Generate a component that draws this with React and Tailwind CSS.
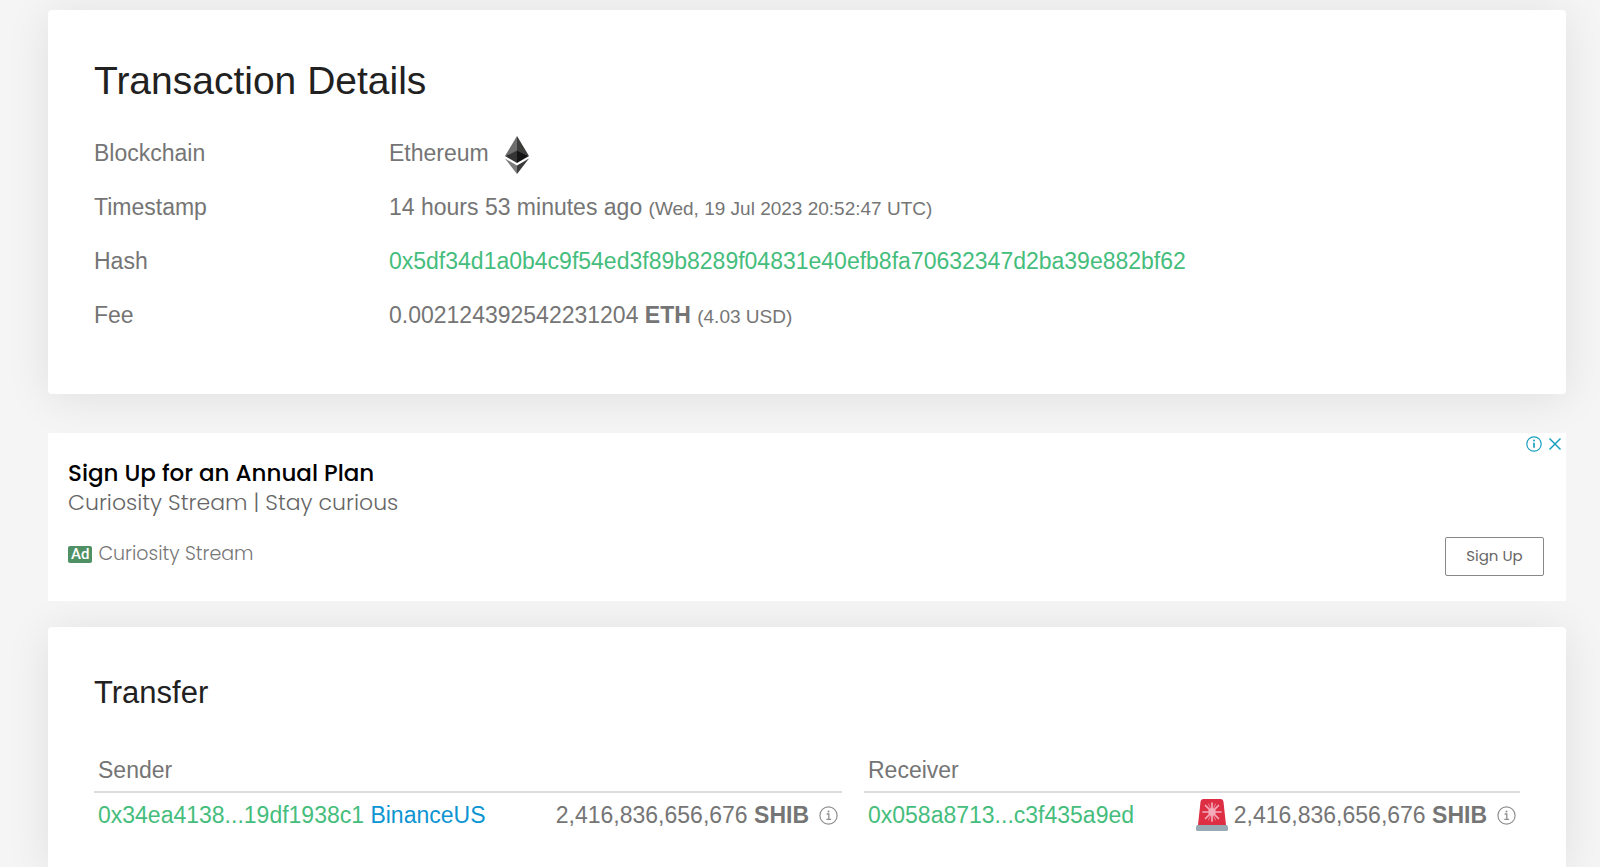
const HASH = '0x5df34d1a0b4c9f54ed3f89b8289f04831e40efb8fa70632347d2ba39e882bf62';

const transfers = [
  {
    title: 'Sender',
    address: '0x34ea4138...19df1938c1',
    owner: 'BinanceUS',
    amount: '2,416,836,656,676',
    symbol: 'SHIB',
  },
  {
    title: 'Receiver',
    address: '0x058a8713...c3f435a9ed',
    alert: true,
    amount: '2,416,836,656,676',
    symbol: 'SHIB',
  },
];

function EthereumIcon() {
  return (
    <svg className="w-6 h-11" viewBox="0 -4 24 44" role="img" aria-label="Ethereum logo">
      <path d="M12 1 0 21l12-5z" fill="#6e6e6e" />
      <path d="M12 1v15l12 5z" fill="#3c3c3b" />
      <path d="M0 21l12-5.500v12.500z" fill="#343434" />
      <path d="M24 21l-12-5.500v12.500z" fill="#141414" />
      <path d="M0 23.500l12 7V39z" fill="#7c7c7b" />
      <path d="M24 23.500l-12 7V39z" fill="#3a3a3a" />
    </svg>
  );
}

function InfoIcon() {
  return (
    <svg className="w-[19px] h-[19px]" viewBox="0 0 19 19" fill="none" stroke="#8f8f8f">
      <circle cx="9.500" cy="9.500" r="8.600" strokeWidth="1.200" />
      <path d="M7.600 8h2.200v5.300M7.300 13.400h4.800" strokeWidth="1.300" />
      <circle cx="9.500" cy="5.400" r="1" fill="#8f8f8f" stroke="none" />
    </svg>
  );
}

function SirenIcon() {
  return (
    <svg className="w-8 h-8" viewBox="0 0 32 32" role="img" aria-label="Alert">
      <path d="M4.500 3Q4.800 0 7.500 0h17q2.700 0 3 3L30 26H2z" fill="#dd2e44" />
      <g stroke="#f4abba" strokeWidth="1.700" strokeLinecap="round">
        <path d="M16 4v18M7 13h18M9.500 6.500l13 13M22.500 6.500l-13 13" />
        <path d="M12.500 5l7 16M19.500 5l-7 16" strokeWidth="0.700" />
      </g>
      <circle cx="16" cy="13" r="3.800" fill="#f4abba" />
      <path d="M1.500 26h29q1.500 0 1.500 2v2.500q0 1.500-1.500 1.500h-29Q0 32 0 30.500V28q0-2 1.500-2z" fill="#99aab5" />
    </svg>
  );
}

function DetailRow({ label, children }) {
  return (
    <div className="flex items-center min-h-[54px]">
      <dt className="w-[295px] shrink-0">{label}</dt>
      <dd className="flex-1 min-w-0 break-words">{children}</dd>
    </div>
  );
}

function TransactionDetails() {
  return (
    <section className="bg-white rounded px-[46px] pt-[49px] pb-[52px] shadow-[0_4px_45px_rgba(0,0,0,0.09)]">
      <h1 className="text-[39px] leading-[44px] text-[#212121] mb-[23px]">Transaction Details</h1>
      <dl className="text-[23px] leading-[28px]">
        <DetailRow label="Blockchain">
          <span className="flex items-center gap-4">
            Ethereum
            <EthereumIcon />
          </span>
        </DetailRow>
        <DetailRow label="Timestamp">
          14 hours 53 minutes ago <small className="text-[19px] leading-none">(Wed, 19 Jul 2023 20:52:47 UTC)</small>
        </DetailRow>
        <DetailRow label="Hash">
          <a href="#hash" className="text-[#45bd7c]">{HASH}</a>
        </DetailRow>
        <DetailRow label="Fee">
          0.002124392542231204 <strong>ETH</strong>{' '}
          <small className="text-[19px] leading-none">(4.03 USD)</small>
        </DetailRow>
      </dl>
    </section>
  );
}

function AdBanner() {
  return (
    <aside className="relative bg-white px-5 pt-[26px] pb-[25px] font-['Poppins','Inter',sans-serif]">
      <div className="absolute top-[3px] right-[3px] flex items-center gap-[5px]">
        <button type="button" aria-label="About this ad" className="text-[#1a9fc0]">
          <svg className="w-4 h-4" viewBox="0 0 16 16" fill="none" stroke="currentColor">
            <circle cx="8" cy="8" r="7.200" strokeWidth="1.200" />
            <path d="M8 6.800v5" strokeWidth="1.700" />
            <circle cx="8" cy="4.500" r="1" fill="currentColor" stroke="none" />
          </svg>
        </button>
        <button type="button" aria-label="Close ad" className="text-[#1a9fc0]">
          <svg className="w-4 h-4" viewBox="0 0 16 16" fill="none" stroke="currentColor">
            <path d="M2.500 2.500l11 11M13.500 2.500l-11 11" strokeWidth="1.500" />
          </svg>
        </button>
      </div>
      <h2 className="text-[23px] leading-[29px] font-medium text-black">Sign Up for an Annual Plan</h2>
      <p className="text-[22px] leading-[29px] font-light text-[#666]">Curiosity Stream | Stay curious</p>
      <div className="flex items-start justify-between mt-5 pr-[2px]">
        <p className="flex items-center gap-[6px] pt-[3px] text-[19px] leading-[28px] font-light text-[#777]">
          <span className="rounded-xs bg-[#4f9065] px-[3px] font-['Roboto',sans-serif] text-[15px] leading-[17px] font-medium text-white">
            Ad
          </span>
          Curiosity Stream
        </p>
        <button type="button" className="w-[99px] h-[39px] rounded-xs border border-[#888] text-[15px] text-[#666]">
          Sign Up
        </button>
      </div>
    </aside>
  );
}

function TransferTable({ item }) {
  return (
    <table className="w-full self-start whitespace-nowrap text-[23px] leading-[28px]">
      <thead>
        <tr className="border-b-2 border-[#dcdcdc]">
          <th colSpan={2} className="px-1 pb-[7px] text-left font-normal">{item.title}</th>
        </tr>
      </thead>
      <tbody>
        <tr>
          <td className="pl-1 py-[6px]">
            <a href="#address" className="text-[#45bd7c]">{item.address}</a>
            {item.owner && (
              <>
                {' '}
                <a href="#owner" className="text-[#0d94d2]">{item.owner}</a>
              </>
            )}
          </td>
          <td className="pr-1 py-[6px]">
            <div className="flex items-center justify-end h-8 gap-[6px]">
              {item.alert && <SirenIcon />}
              <span>
                {item.amount} <strong>{item.symbol}</strong>
              </span>
              <button type="button" aria-label="More info" className="ml-1">
                <InfoIcon />
              </button>
            </div>
          </td>
        </tr>
      </tbody>
    </table>
  );
}

function Transfer() {
  return (
    <section className="relative grow bg-white rounded-t px-[46px] pt-[47px] pb-8 shadow-[0_4px_45px_rgba(0,0,0,0.09)]">
      <h2 className="text-[31px] leading-[38px] text-[#212121] mb-11">Transfer</h2>
      <div className="grid grid-cols-[748fr_656fr] gap-[22px]">
        {transfers.map((item) => (
          <TransferTable key={item.title} item={item} />
        ))}
      </div>
    </section>
  );
}

export default function App() {
  return (
    <main className="flex flex-col min-h-screen overflow-hidden bg-[#f5f5f5] pl-12 pr-[34px] pt-[10px] font-['Liberation_Sans',Arial,sans-serif] text-[#757575]">
      <TransactionDetails />
      <div className="relative z-10 mt-[39px] mb-[26px]">
        <AdBanner />
      </div>
      <Transfer />
    </main>
  );
}
